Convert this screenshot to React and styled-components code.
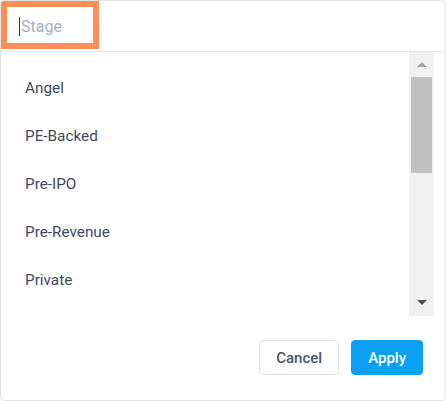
import React from "react";
import styled, { createGlobalStyle } from "styled-components";

const Global = createGlobalStyle`
  html, body { margin: 0; padding: 0; background: #ffffff; }
  body { font-family: Roboto, "Liberation Sans", sans-serif; }
  * { box-sizing: border-box; }
`;

const Card = styled.div`
  width: 446px;
  height: 401px;
  border: 1px solid #e1e5ea;
  border-radius: 4px;
  background: #fff;
  display: flex;
  flex-direction: column;
  overflow: hidden;
`;

const Header = styled.div`
  height: 51px;
  flex: none;
  border-bottom: 1px solid #e1e5ea;
  display: flex;
  align-items: flex-start;
`;

const SearchBox = styled.label`
  width: 98px;
  height: 48px;
  display: flex;
  align-items: center;
  padding: 3px 6px 0 18px;
  outline: 6px solid #ff8f57;
  outline-offset: -6px;
  background: #fff;
`;

const Caret = styled.span`
  width: 1px;
  height: 19px;
  background: #2d3748;
  flex: none;
`;

const SearchInput = styled.input`
  flex: 1;
  min-width: 0;
  height: 24px;
  border: none;
  outline: none;
  margin: 0;
  padding: 0 0 0 1px;
  font-family: Roboto, "Liberation Sans", sans-serif;
  font-size: 16px;
  color: #2d3748;
  caret-color: transparent;
  background: transparent;
  &::placeholder { color: #a3b0c2; }
`;

const Body = styled.div`
  height: 264px;
  flex: none;
  display: flex;
  padding-right: 11px;
`;

const List = styled.div`
  flex: 1;
  overflow: hidden;
  padding-top: 12px;
`;

const Item = styled.div`
  height: 48px;
  display: flex;
  align-items: center;
  padding-left: 24px;
  font-size: 15.3px;
  color: #3d4a5c;
`;

const Scrollbar = styled.div`
  width: 25px;
  background: #f1f1f1;
  display: flex;
  flex-direction: column;
  align-items: center;
`;

const ArrowBtn = styled.div`
  height: 24px;
  width: 100%;
  display: flex;
  justify-content: center;
  align-items: ${(p) => (p.$down ? "flex-start" : "flex-end")};
  padding: ${(p) => (p.$down ? "8px 0 0" : "0 0 9px")};
  flex: none;
`;

const Thumb = styled.div`
  width: 21px;
  height: 96px;
  margin-top: 1px;
  background: #c1c1c1;
  flex: none;
`;

const Spacer = styled.div`
  flex: 1;
`;

const Footer = styled.div`
  flex: 1;
  display: flex;
  justify-content: flex-end;
  align-items: flex-start;
  gap: 12px;
  padding: 24px 22px 0 0;
`;

const Button = styled.button`
  height: 35px;
  padding: 0 16px;
  border-radius: 4px;
  font-family: Roboto, "Liberation Sans", sans-serif;
  font-size: 15px;
  font-weight: 500;
  cursor: pointer;
  border: 1px solid ${(p) => (p.$primary ? "#0aa0f4" : "#dde2e8")};
  background: ${(p) => (p.$primary ? "#0aa0f4" : "#ffffff")};
  color: ${(p) => (p.$primary ? "#ffffff" : "#4a5568")};
`;

const Tri = ({ up, color }) => (
  <svg width="10" height="5" viewBox="0 0 10 5">
    <polygon points={up ? "0,5 10,5 5,0" : "0,0 10,0 5,5"} fill={color} />
  </svg>
);

const items = ["Angel", "PE-Backed", "Pre-IPO", "Pre-Revenue", "Private"];

export default function App() {
  return (
    <>
      <Global />
      <Card>
        <Header>
          <SearchBox>
            <Caret />
            <SearchInput placeholder="Stage" />
          </SearchBox>
        </Header>
        <Body>
          <List>
            {items.map((t) => (
              <Item key={t}>{t}</Item>
            ))}
          </List>
          <Scrollbar>
            <ArrowBtn>
              <Tri up color="#a3a3a3" />
            </ArrowBtn>
            <Thumb />
            <Spacer />
            <ArrowBtn $down>
              <Tri color="#505050" />
            </ArrowBtn>
          </Scrollbar>
        </Body>
        <Footer>
          <Button>Cancel</Button>
          <Button $primary>Apply</Button>
        </Footer>
      </Card>
    </>
  );
}
